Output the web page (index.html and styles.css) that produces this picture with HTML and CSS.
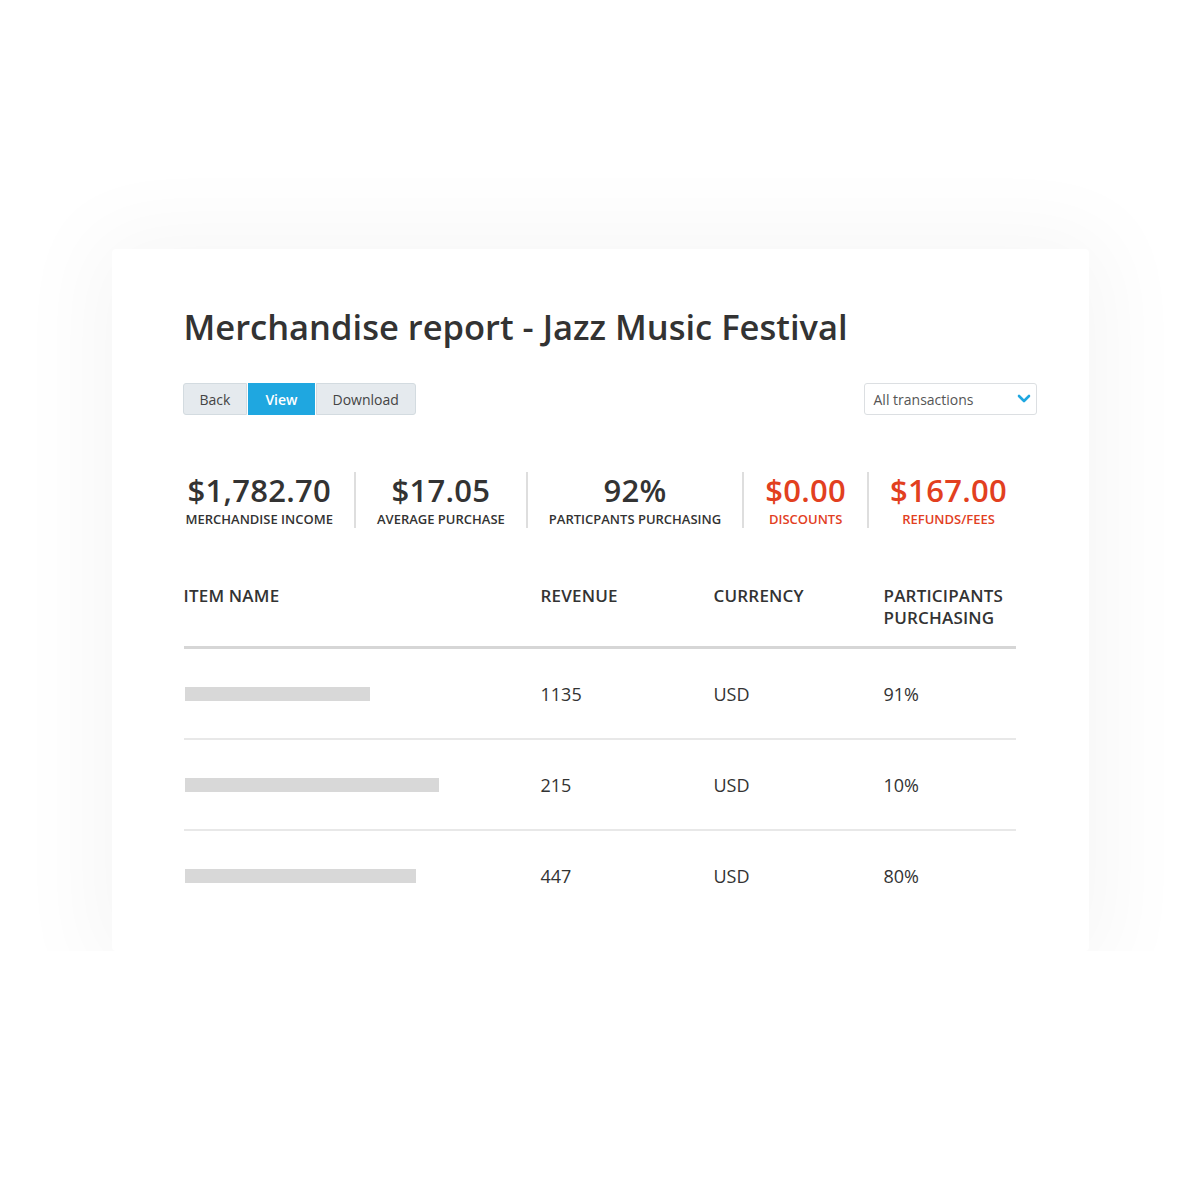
FILE: index.html
```html
<!DOCTYPE html>
<html lang="en">
<head>
    <meta charset="UTF-8">
    <meta name="viewport" content="width=device-width, initial-scale=1.0">
    <title>Merchandise report</title>
    <link rel="stylesheet" href="styles.css">
</head>
<body>
    <div class="card">
        <h1>Merchandise report - Jazz Music Festival</h1>

        <div class="toolbar">
            <div class="btn-group">
                <button class="btn">Back</button>
                <button class="btn active">View</button>
                <button class="btn">Download</button>
            </div>
            <div class="select">
                <span>All transactions</span>
                <svg width="14" height="10" viewBox="0 0 14 10">
                    <polyline points="2,2 7,7 12,2" fill="none" stroke="#1fa7e0" stroke-width="2.6" stroke-linecap="round" stroke-linejoin="round"/>
                </svg>
            </div>
        </div>

        <div class="stats">
            <div class="stat">
                <div class="stat-value">$1,782.70</div>
                <div class="stat-label">Merchandise income</div>
            </div>
            <div class="stat">
                <div class="stat-value">$17.05</div>
                <div class="stat-label">Average purchase</div>
            </div>
            <div class="stat">
                <div class="stat-value">92%</div>
                <div class="stat-label">Particpants purchasing</div>
            </div>
            <div class="stat negative">
                <div class="stat-value">$0.00</div>
                <div class="stat-label">Discounts</div>
            </div>
            <div class="stat negative">
                <div class="stat-value">$167.00</div>
                <div class="stat-label">Refunds/fees</div>
            </div>
        </div>

        <table class="report">
            <thead>
                <tr>
                    <th class="col-name">Item name</th>
                    <th class="col-rev">Revenue</th>
                    <th class="col-cur">Currency</th>
                    <th class="col-part">Participants purchasing</th>
                </tr>
            </thead>
            <tbody>
                <tr>
                    <td><div class="placeholder" style="width: 185px"></div></td>
                    <td>1135</td>
                    <td>USD</td>
                    <td>91%</td>
                </tr>
                <tr>
                    <td><div class="placeholder" style="width: 254px"></div></td>
                    <td>215</td>
                    <td>USD</td>
                    <td>10%</td>
                </tr>
                <tr>
                    <td><div class="placeholder" style="width: 231px"></div></td>
                    <td>447</td>
                    <td>USD</td>
                    <td>80%</td>
                </tr>
            </tbody>
        </table>
    </div>
</body>
</html>
```

FILE: styles.css
```css
body {
    margin: 0;
    padding-top: 249px;
    background-color: #fff;
    font-family: "Open Sans", "Noto Sans", sans-serif;
    color: #333;
    display: flex;
    justify-content: center;
}
.card {
    box-sizing: border-box;
    width: 977px;
    height: 702px;
    padding: 55px 52px 0 72px;
    background-color: #fff;
    border-radius: 4px;
    box-shadow: 0 4px 90px 18px rgba(0, 0, 0, 0.04);
}
h1 {
    margin: 0;
    font-size: 34.5px;
    font-weight: 600;
    line-height: 46px;
    color: #333;
}
.toolbar {
    margin-top: 33px;
    display: flex;
    justify-content: space-between;
    align-items: center;
}
.btn-group {
    display: flex;
    gap: 1px;
    margin-left: -1px;
}
.btn {
    height: 32px;
    padding: 0 16px;
    font-family: "Open Sans", sans-serif;
    font-size: 14px;
    color: #444;
    background-color: #e5eaee;
    border: 1px solid #d3dbe0;
    cursor: pointer;
}
.btn:first-child {
    border-radius: 3px 0 0 3px;
}
.btn:last-child {
    border-radius: 0 3px 3px 0;
}
.btn.active {
    background-color: #1fa7e0;
    border-color: #1fa7e0;
    color: #fff;
    font-weight: 600;
}
.select {
    box-sizing: border-box;
    width: 173px;
    height: 32px;
    padding: 0 5px 0 9px;
    display: flex;
    justify-content: space-between;
    align-items: center;
    border: 1px solid #dcdfe2;
    border-radius: 3px;
    font-size: 14px;
    color: #555;
}
.stats {
    margin-top: 57px;
    display: flex;
    align-items: stretch;
}
.stat {
    padding: 0 21px;
    display: flex;
    flex-direction: column;
    align-items: center;
    border-left: 2px solid #dedede;
}
.stat:first-child {
    padding-left: 2px;
    border-left: none;
}
.stat-value {
    font-size: 31px;
    font-weight: 600;
    line-height: 36px;
    letter-spacing: 0.3px;
    color: #333;
}
.stat-label {
    margin-top: 2px;
    font-size: 13px;
    font-weight: 600;
    line-height: 18px;
    text-transform: uppercase;
    color: #333;
}
.negative .stat-value, .negative .stat-label {
    color: #e2401f;
}
.report {
    margin-top: 57px;
    width: 832px;
    border-collapse: collapse;
}
.report th {
    padding: 0 0 17px 0;
    text-align: left;
    vertical-align: top;
    font-size: 17px;
    font-weight: 600;
    line-height: 22px;
    letter-spacing: 0.2px;
    text-transform: uppercase;
    border-bottom: 3px solid #d6d6d6;
}
.col-name {
    width: 357px;
}
.col-rev {
    width: 173px;
}
.col-cur {
    width: 170px;
}
.col-part {
    width: 132px;
}
.report td {
    height: 89px;
    padding: 0;
    font-size: 18px;
    color: #333;
    border-bottom: 2px solid #e8e8e8;
}
.report tbody tr:last-child td {
    border-bottom: none;
}
.placeholder {
    height: 14px;
    margin-left: 1px;
    background-color: #d8d8d8;
}
```
